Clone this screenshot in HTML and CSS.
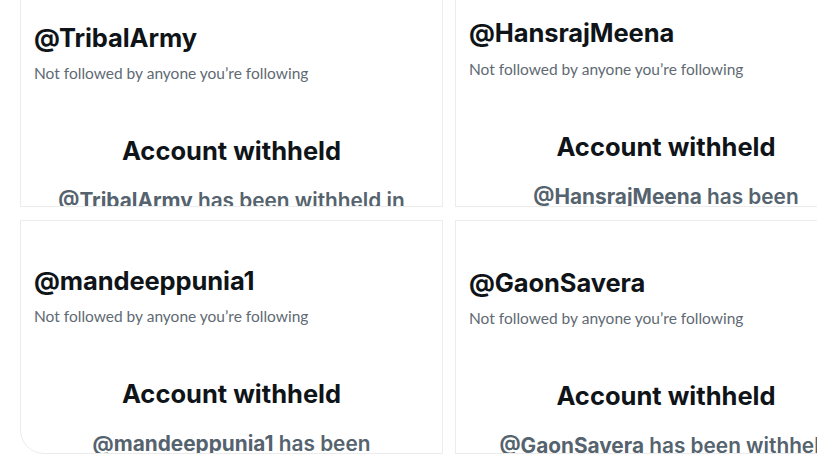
FILE: index.html
```html
<!DOCTYPE html>
<html lang="en">
<head>
<meta charset="utf-8">
<title>Account withheld</title>
<link rel="stylesheet" href="styles.css">
</head>
<body>
<main class="grid">
  <section class="panel panel-top panel-a">
    <h2 class="handle">@TribalArmy</h2>
    <p class="sub">Not followed by anyone you’re following</p>
    <h3 class="headline">Account withheld</h3>
    <p class="body"><strong>@TribalArmy</strong> has been withheld in India</p>
  </section>
  <section class="panel panel-top panel-b">
    <h2 class="handle">@HansrajMeena</h2>
    <p class="sub">Not followed by anyone you’re following</p>
    <h3 class="headline">Account withheld</h3>
    <p class="body"><strong>@HansrajMeena</strong> has been withheld in India</p>
  </section>
  <section class="panel panel-c">
    <h2 class="handle">@mandeeppunia1</h2>
    <p class="sub">Not followed by anyone you’re following</p>
    <h3 class="headline">Account withheld</h3>
    <p class="body"><strong>@mandeeppunia1</strong> has been withheld in India</p>
  </section>
  <section class="panel panel-d">
    <h2 class="handle">@GaonSavera</h2>
    <p class="sub">Not followed by anyone you’re following</p>
    <h3 class="headline">Account withheld</h3>
    <p class="body"><strong>@GaonSavera</strong> has been withheld in India</p>
  </section>
</main>
</body>
</html>
```
FILE: styles.css
```css
html, body {
  margin: 0;
  padding: 0;
  background: #ffffff;
  overflow: hidden;
}

body {
  width: 817px;
  height: 474px;
}

.grid {
  display: grid;
  grid-template-columns: 423px 422px;
  column-gap: 12px;
  row-gap: 13px;
  padding-left: 20px;
  align-items: start;
  width: max-content;
}

.panel {
  box-sizing: border-box;
  border: 1px solid #ececec;
  overflow: hidden;
  padding-left: 13px;
  padding-right: 13px;
  background: #fff;
}

.panel-top {
  border-top: none;
  height: 207px;
}

.panel-a { padding-top: 22px; }
.panel-b { padding-top: 17px; }
.panel-c { height: 234px; padding-top: 44px; border-bottom-left-radius: 24px; }
.panel-d { height: 234px; padding-top: 46px; }

.handle {
  margin: 0;
  font-family: Inter, "Open Sans", sans-serif;
  font-weight: 700;
  font-size: 25.5px;
  line-height: 31px;
  color: #0f1419;
  letter-spacing: -0.1px;
}

.sub {
  margin: 10px 0 0;
  font-family: Lato, "Open Sans", sans-serif;
  font-size: 15.5px;
  line-height: 20px;
  color: #5f6a73;
}

.panel-b .sub {
  margin-top: 11px;
}

.headline {
  margin: 52px 0 0;
  text-align: center;
  font-family: Inter, "Open Sans", sans-serif;
  font-weight: 700;
  font-size: 25.5px;
  line-height: 31px;
  color: #0f1419;
}

.body {
  margin: 22px 0 0;
  padding: 0 20px;
  text-align: center;
  font-family: Inter, "Open Sans", sans-serif;
  font-weight: 600;
  font-size: 20.8px;
  line-height: 26px;
  color: #55636e;
}

.body strong {
  font-weight: 700;
}
```
